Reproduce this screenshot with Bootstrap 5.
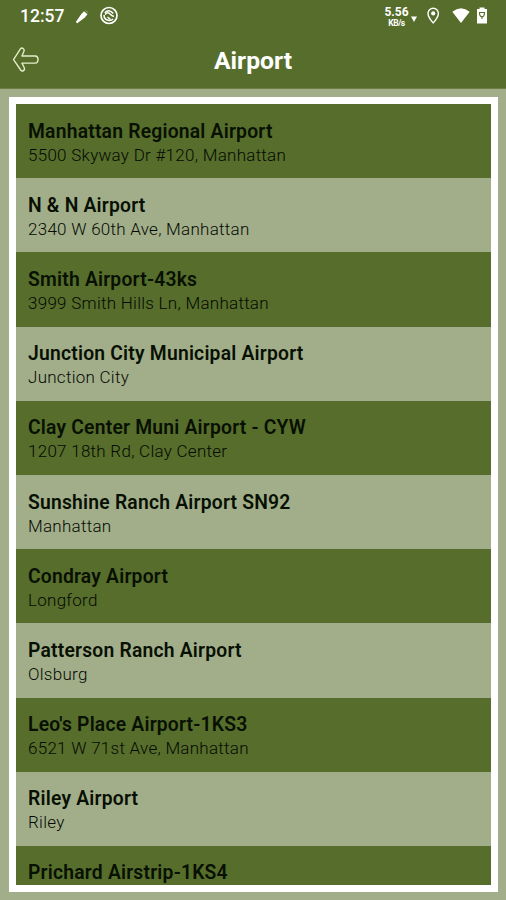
<!DOCTYPE html>
<html lang="en">
<head>
<meta charset="utf-8">
<meta name="viewport" content="width=device-width, initial-scale=1">
<title>Airport</title>
<link href="https://cdn.jsdelivr.net/npm/bootstrap@5.3.0/dist/css/bootstrap.min.css" rel="stylesheet">
<style>
:root{--olive:#566d2b;--sage:#a2ae8a}
body{font-family:Roboto,"Liberation Sans",sans-serif;background:var(--sage);color:#081003}
.screen{height:900px}
.top-area{height:89px;background:var(--olive);border-bottom:1px solid #6b7f45}
.status{height:32px;padding:0 16px 0 20px}
.clock{font-size:17.5px;font-weight:500;line-height:32px;width:55px}
.speed{font-size:12px;font-weight:700;line-height:13px;width:25px}
.speed small{font-size:8.5px;font-weight:700;line-height:8px;letter-spacing:-.5px}
.title-bar{height:57px;padding:0 12px}
.title-bar h1{font-size:24.7px;font-weight:700;line-height:55px}
.side{width:28px}
.frame{margin:8px 8px 8px 9px;border:7px solid #fff}
.entry{flex:0 0 74.2px;padding:14.6px 12px 0;background:var(--sage)}
.entry:nth-child(odd){background:var(--olive)}
.entry-name{font-size:19.3px;font-weight:600;line-height:25px;letter-spacing:.22px}
.entry-place{font-size:17px;font-weight:300;line-height:23.4px;letter-spacing:.27px;color:#050a02}
</style>
</head>
<body>
<div class="screen d-flex flex-column overflow-hidden">
  <header class="top-area flex-shrink-0 text-white">
    <div class="status d-flex align-items-center">
      <span class="clock">12:57</span>
      <svg width="14" height="15" viewBox="-.5 0 14 15"><path d="M.5 12.800 6 4.800l3.800 3.400-7.700 5.900q-1.300.5-1.600-1.300z" fill="#fff"/><path d="m5.500 5.500 3-3.300 3.500 3-2.700 3.300z" fill="#fff"/><path d="m10 1.500 2.700 2.300" stroke="#8fa06b"/></svg>
      <svg class="ms-1" width="31" height="20" viewBox="-6 0 31 20" fill="none" stroke="#fff"><circle cx="10" cy="9.500" r="8" stroke-width="1.700"/><path d="M5.800 6.800Q10 2.200 14.300 7.500M5 9q0 5 5.500 5.500 2 0 3.500-1.500" stroke-width="1.500"/><path d="M6 8.500q2.500-3 5-.5t4 2.300M8.500 11l3 2.500" stroke-width="1.500"/></svg>
      <div class="ms-auto d-flex align-items-center">
        <div class="speed d-flex flex-column align-items-center"><span>5.56</span><small>KB/s</small></div>
        <svg width="8" height="20" viewBox="-2 0 8 20"><path d="M0 10.500h6L3 16z" fill="#fff"/></svg>
        <svg class="ms-2" width="15" height="18" viewBox="-1 0 15 18"><path d="M7.200 1.200a5.200 5.200 0 0 0-5.200 5.200c0 3.600 5.200 9.500 5.200 9.500s5.200-5.900 5.200-9.500a5.200 5.200 0 0 0-5.200-5.200z" fill="none" stroke="#fff" stroke-width="1.400"/><circle cx="7.200" cy="6.400" r="2.100" fill="#fff"/></svg>
        <svg class="ms-2" width="24" height="18" viewBox="-4 0 24 18"><path d="M.3 4.800Q9-2.500 17.700 4.800L9 16z" fill="#fff"/></svg>
        <svg class="ms-1" width="14" height="18" viewBox="2 0 14 18"><path d="M5.500 .5h5V2H13v14.500H3V2h2.500z" fill="#fff"/><path d="M5.500 5.500q0 4 2.500 4.500 2.500-.5 2.500-4.500zM8 9v3" fill="none" stroke="#566d2b" stroke-width="1.100"/></svg>
      </div>
    </div>
    <div class="title-bar d-flex align-items-center">
      <a href="#" class="side d-flex pb-1" aria-label="Back"><svg width="29" height="28" viewBox="-.3 -.4 29 28"><path d="M1.300 14.200 8.400 3.200q1.300-1.700 2.900-.5 1.700 1.300.7 3.200L10 10.500h13.700q3 .2 3 3.700t-3 3.700H10l2.300 4.500q1 2-.7 3.200-1.600 1.100-2.900-.6z" fill="none" stroke="#e4efc9" stroke-width="1.400" stroke-linejoin="round"/></svg></a>
      <h1 class="flex-fill text-center mb-0">Airport</h1>
      <span class="side"></span>
    </div>
  </header>
  <main class="frame flex-fill d-flex flex-column overflow-hidden">
    <div class="entry"><div class="entry-name">Manhattan Regional Airport</div><div class="entry-place">5500 Skyway Dr #120, Manhattan</div></div>
    <div class="entry"><div class="entry-name">N &amp; N Airport</div><div class="entry-place">2340 W 60th Ave, Manhattan</div></div>
    <div class="entry"><div class="entry-name">Smith Airport-43ks</div><div class="entry-place">3999 Smith Hills Ln, Manhattan</div></div>
    <div class="entry"><div class="entry-name">Junction City Municipal Airport</div><div class="entry-place">Junction City</div></div>
    <div class="entry"><div class="entry-name">Clay Center Muni Airport - CYW</div><div class="entry-place">1207 18th Rd, Clay Center</div></div>
    <div class="entry"><div class="entry-name">Sunshine Ranch Airport SN92</div><div class="entry-place">Manhattan</div></div>
    <div class="entry"><div class="entry-name">Condray Airport</div><div class="entry-place">Longford</div></div>
    <div class="entry"><div class="entry-name">Patterson Ranch Airport</div><div class="entry-place">Olsburg</div></div>
    <div class="entry"><div class="entry-name">Leo's Place Airport-1KS3</div><div class="entry-place">6521 W 71st Ave, Manhattan</div></div>
    <div class="entry"><div class="entry-name">Riley Airport</div><div class="entry-place">Riley</div></div>
    <div class="entry"><div class="entry-name">Prichard Airstrip-1KS4</div></div>
  </main>
</div>
<script src="https://cdn.jsdelivr.net/npm/bootstrap@5.3.0/dist/js/bootstrap.bundle.min.js"></script>
</body>
</html>
